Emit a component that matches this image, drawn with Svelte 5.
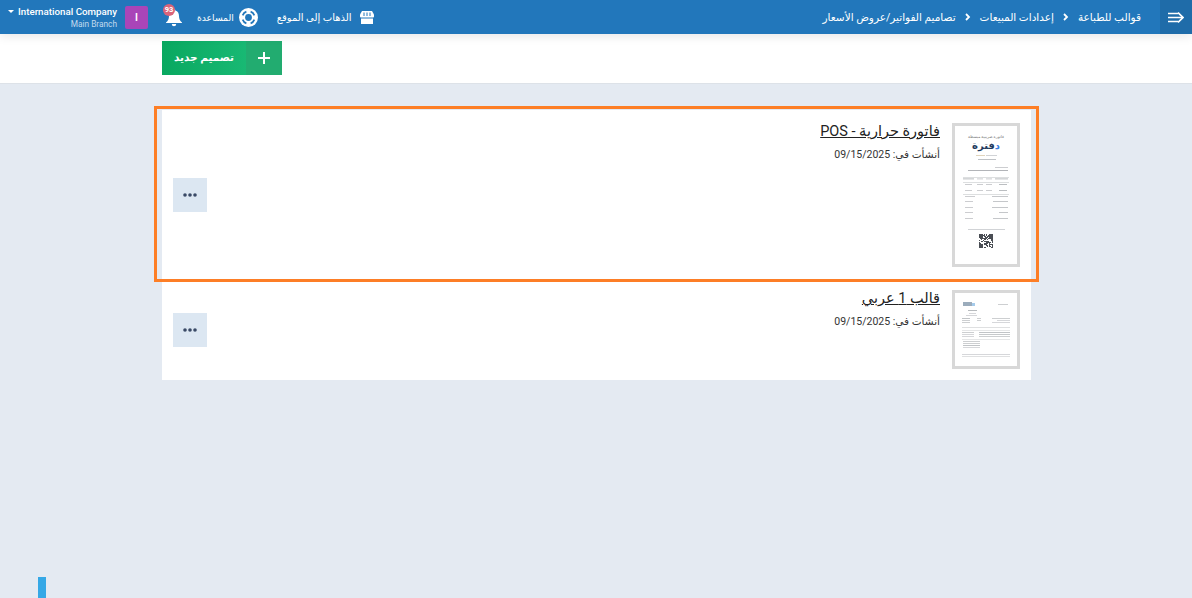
<script>
  const crumbs = ['قوالب للطباعة', 'إعدادات المبيعات', 'تصاميم الفواتير/عروض الأسعار'];
  const templates = [
    { title: 'فاتورة حرارية - POS', date: '09/15/2025', kind: 'thermal' },
    { title: 'قالب 1 عربي', date: '09/15/2025', kind: 'a4' },
  ];

  // [x, y, width, colour] of the tiny lines in the previews
  const thermalLines = [
    [21, 29, 9, '#c9b48a'], [31, 29, 11, '#aeb2b8'],
    [23, 33, 18, '#8f949a'],
    [40, 41, 13, '#a5a8ad'], [13, 44, 40, '#777b82'],
    [8, 51, 46, '#c5c7ca'], [8, 52.500, 11, '#888c92'], [22, 52.500, 6, '#a5a8ad'], [31, 52.500, 6, '#a5a8ad'], [40, 52.500, 13, '#888c92'],
    [8, 56, 46, '#c5c7ca'],
    [10, 58, 7, '#a5a8ad'], [22, 58, 6, '#a5a8ad'], [31, 58, 6, '#a5a8ad'], [44, 58, 8, '#888c92'],
    [10, 64, 7, '#a5a8ad'], [22, 64, 6, '#a5a8ad'], [31, 64, 6, '#a5a8ad'], [44, 64, 8, '#888c92'],
    [8, 68, 46, '#c5c7ca'],
    [10, 70, 10, '#a5a8ad'], [37, 70, 16, '#999da2'],
    [10, 75, 8, '#a5a8ad'], [38, 75, 15, '#999da2'],
    [10, 81, 8, '#a5a8ad'], [37, 81, 16, '#999da2'],
    [10, 86, 8, '#a5a8ad'], [44, 86, 9, '#999da2'],
    [10, 92, 8, '#a5a8ad'], [38, 92, 15, '#999da2'],
    [13, 103, 37, '#aeb2b8'],
  ];
  const a4Lines = [
    [43, 11, 10, '#a5a8ad'],
    [13, 17, 9, '#7f8489'], [14, 20, 7, '#b5b8bd'], [11, 22, 11, '#b5b8bd'],
    [7, 25, 8, '#8f949a'], [7, 27, 8, '#a5a8ad'], [7, 29, 8, '#a5a8ad'],
    [22, 25, 4, '#a5a8ad'], [22, 27, 4, '#a5a8ad'],
    [37, 25, 18, '#a5a8ad'], [42, 27, 13, '#b5b8bd'], [37, 29, 18, '#b5b8bd'],
    [7, 34, 48, '#c5c7ca'], [7, 37, 48, '#d0d2d5'],
    [7, 39, 12, '#a5a8ad'], [24, 39, 31, '#8f949a'],
    [7, 41, 12, '#b5b8bd'], [24, 41, 31, '#999da2'],
    [7, 43, 12, '#b5b8bd'], [24, 43, 31, '#a5a8ad'],
    [7, 46, 48, '#d0d2d5'],
    [8, 48, 17, '#a5a8ad'], [8, 50, 17, '#a5a8ad'], [8, 52, 17, '#8f949a'], [8, 54, 17, '#b5b8bd'],
    [7, 61, 48, '#b5b8bd'], [7, 63, 48, '#c5c7ca'],
  ];

  // scattered modules for the little QR code, fixed seed so it never changes
  const qrCells = [];
  let seed = 7;
  for (let y = 0; y < 14; y++) {
    for (let x = 0; x < 14; x++) {
      seed = (seed * 137 + 61) % 251;
      if (seed % 2 === 0) qrCells.push([x, y]);
    }
  }
</script>

<div class="page" dir="rtl">
  <header class="topbar">
    <button class="menu-toggle" aria-label="menu">
      <svg width="16" height="11" viewBox="0 0 16 11" fill="none" stroke="#fff" stroke-width="1.700">
        <path d="M0 1.500h10M0 5.500h14M0 9.500h10" />
        <path d="M10 .6 15 5.500l-5 4.900" />
      </svg>
    </button>
    <nav class="crumbs">
      {#each crumbs as crumb, i}
        {#if i > 0}
          <svg width="6" height="8" viewBox="0 0 6 8" fill="none" stroke="#fff" stroke-width="1.800"><path d="M1 1l3 3-3 3" /></svg>
        {/if}
        <span>{crumb}</span>
      {/each}
    </nav>
    <div class="top-actions">
      <a class="top-link" href="#site">
        <svg width="14" height="13" viewBox="0 0 14 13" fill="#fff">
          <path d="M2 0h10l2 3.500V5.500a1 1 0 0 1-1 1H1a1 1 0 0 1-1-1V3.500z" />
          <path d="M1 7.500h12V13H1z" />
          <path d="M4 1.500v3.500M7 1.500v3.500M10 1.500v3.500" stroke="#2277bb" stroke-width="1" />
        </svg>
        <span>الذهاب إلى الموقع</span>
      </a>
      <a class="top-link help-link" href="#help">
        <svg width="19" height="19" viewBox="0 0 19 19" fill="none">
          <circle cx="9.500" cy="9.500" r="9.500" fill="#fff" />
          <circle cx="9.500" cy="9.500" r="3.400" fill="#2277bb" />
          <path d="M15.330 11.620A6.200 6.200 0 0 1 11.620 15.330M7.380 15.330A6.200 6.200 0 0 1 3.670 11.620M3.670 7.380A6.200 6.200 0 0 1 7.380 3.670M11.620 3.670A6.200 6.200 0 0 1 15.330 7.380" stroke="#2277bb" stroke-width="1.700" />
        </svg>
        <span>المساعدة</span>
      </a>
      <div class="bell">
        <svg width="16" height="18" viewBox="0 0 16 18" fill="#fff">
          <path d="M8 0a1.300 1.300 0 0 1 1.300 1.400C12 2 13 4.300 13 7c0 3 1 5 3 6.500V14H0v-.5C2 12 3 10 3 7c0-2.700 1-5 3.700-5.600A1.300 1.300 0 0 1 8 0z" />
          <path d="M5.800 15h4.400a2.200 2.200 0 0 1-4.400 0z" />
        </svg>
        <span class="badge">93</span>
      </div>
      <span class="avatar">I</span>
      <div class="company">
        <div class="company-name" dir="ltr"><i class="caret"></i>International Company</div>
        <div class="branch">Main Branch</div>
      </div>
    </div>
  </header>

  <div class="toolbar">
    <div class="toolbar-inner">
      <button class="new-btn">
        <span class="plus">
          <svg width="12" height="12" viewBox="0 0 12 12" stroke="#fff" stroke-width="2"><path d="M6 0v12M0 6h12" /></svg>
        </span>
        <span class="new-label">تصميم جديد</span>
      </button>
    </div>
  </div>

  <main class="content">
    <div class="list">
      {#each templates as t}
        <article class="card {t.kind}">
          <div class="thumb">
            {#if t.kind === 'thermal'}
              <div class="thumb-head">فاتورة ضريبية مبسطة</div>
              <div class="thumb-logo"><span class="dal">د</span>فترة</div>
              <svg class="thumb-art" viewBox="0 0 62 138" width="62" height="138">
                <g opacity="0.7">
                  {#each thermalLines as l}
                    <rect x={l[0]} y={l[1]} width={l[2]} height="0.800" fill={l[3]} />
                  {/each}
                </g>
                <g transform="translate(24 108)" fill="#4a4e54">
                  {#each qrCells as c}
                    <rect x={c[0]} y={c[1]} width="1" height="1" />
                  {/each}
                  <path d="M0 0h4v4H0zM10 0h4v4h-4zM0 10h4v4H0z" />
                </g>
              </svg>
            {:else}
              <svg class="thumb-art" viewBox="0 0 62 73" width="62" height="73">
                <g opacity="0.55">
                  <rect x="8" y="9" width="9" height="4" fill="#4b6a86" />
                  <rect x="17" y="10" width="3" height="3" fill="#5da2dc" />
                  {#each a4Lines as l}
                    <rect x={l[0]} y={l[1]} width={l[2]} height="1" fill={l[3]} />
                  {/each}
                </g>
              </svg>
            {/if}
          </div>
          <div class="card-body">
            <a class="title" href="#template">{t.title}</a>
            <div class="date">أنشأت في: {t.date}</div>
          </div>
          <button class="more" aria-label="more">
            <svg width="14" height="4" viewBox="0 0 14 4" fill="#3a4a66"><circle cx="2" cy="2" r="1.800" /><circle cx="7" cy="2" r="1.800" /><circle cx="12" cy="2" r="1.800" /></svg>
          </button>
        </article>
      {/each}
    </div>
  </main>

  <div class="highlight"></div>
  <div class="side-tab"></div>
</div>

<style>
  :global(body) {
    margin: 0;
    background: #e4eaf2;
  }

  .page {
    position: relative;
    height: 598px;
    overflow: hidden;
    font-family: Roboto, "DejaVu Sans", sans-serif;
    background: #e4eaf2;
  }

  .topbar {
    position: relative;
    display: flex;
    align-items: center;
    height: 34px;
    background: #2277bb;
    color: #fff;
    font-size: 10.500px;
    box-shadow: 0 2px 10px rgba(0, 0, 0, 0.1);
  }

  .menu-toggle {
    display: flex;
    align-items: center;
    justify-content: center;
    width: 32px;
    height: 34px;
    padding: 0;
    border: none;
    background: #1f6ca9;
  }

  .crumbs {
    display: flex;
    align-items: center;
    gap: 9px;
    margin-right: 19px;
  }

  .top-actions {
    display: flex;
    align-items: center;
    margin-right: auto;
    height: 34px;
    font-size: 10px;
  }

  .top-link {
    display: flex;
    align-items: center;
    gap: 8px;
    color: #fff;
    text-decoration: none;
  }

  .help-link {
    margin-right: 19px;
    gap: 5px;
    font-size: 9.200px;
  }

  .bell {
    position: relative;
    display: flex;
    margin-right: 15px;
    margin-top: 1px;
  }

  .badge {
    position: absolute;
    top: -5px;
    left: -3px;
    width: 12px;
    height: 12px;
    border-radius: 50%;
    background: #d9647a;
    font-size: 7.500px;
    font-weight: 700;
    line-height: 12px;
    text-align: center;
  }

  .avatar {
    display: flex;
    align-items: center;
    justify-content: center;
    width: 23px;
    height: 23px;
    margin-right: 18px;
    border-radius: 2px;
    background: #a945b8;
    font-size: 10px;
    font-weight: 700;
  }

  .company {
    margin: 0 8px;
    text-align: left;
  }

  .company-name {
    font-size: 9.750px;
    font-weight: 500;
    line-height: 13px;
  }

  .caret {
    display: inline-block;
    margin-right: 4px;
    vertical-align: middle;
    border: 3px solid transparent;
    border-top: 3px solid #fff;
    border-bottom: 0;
  }

  .branch {
    margin-top: 1px;
    font-size: 8.300px;
    line-height: 11px;
    color: #c3daee;
    text-align: right;
  }

  .toolbar {
    height: 49px;
    background: #fff;
    border-bottom: 1px solid #dde2e8;
  }

  .toolbar-inner {
    display: flex;
    justify-content: flex-end;
    width: 869px;
    margin-right: 161px;
    padding-top: 7px;
  }

  .new-btn {
    display: flex;
    align-items: stretch;
    width: 120px;
    height: 34px;
    padding: 0;
    border: none;
    background: linear-gradient(90deg, #09a860, #1fc07c);
    color: #fff;
    font-family: inherit;
    font-size: 10.500px;
    font-weight: 700;
  }

  .plus {
    display: flex;
    align-items: center;
    justify-content: center;
    width: 36px;
    background: #22ac70;
  }

  .new-label {
    flex: 1;
    line-height: 34px;
  }

  .content {
    padding: 26px 161px 0 0;
  }

  .list {
    display: flex;
    flex-direction: column;
    width: 869px;
  }

  .card {
    display: flex;
    align-items: center;
    box-sizing: border-box;
    padding: 0 11px;
    background: #fff;
  }

  .card.thermal {
    height: 170px;
  }

  .card.a4 {
    height: 100px;
    padding-bottom: 1px;
  }

  .thumb {
    position: relative;
    flex: none;
    box-sizing: border-box;
    width: 68px;
    border: 3px solid #d8d8d8;
    background: #fff;
    overflow: hidden;
  }

  .thermal .thumb {
    height: 144px;
  }

  .a4 .thumb {
    height: 79px;
  }

  .thumb-art {
    display: block;
  }

  .thumb-head {
    position: absolute;
    top: 8px;
    left: 0;
    right: 0;
    font-size: 4px;
    line-height: 5px;
    color: #777;
    text-align: center;
  }

  .thumb-logo {
    position: absolute;
    top: 13px;
    left: 0;
    right: 0;
    font-size: 10px;
    font-weight: 700;
    line-height: 14px;
    color: #1f3a5f;
    text-align: center;
  }

  .dal {
    color: #3f7fe0;
  }

  .card-body {
    flex: 1;
    align-self: flex-start;
    margin-right: 12px;
    color: #222;
  }

  .thermal .card-body {
    padding-top: 11px;
  }

  .a4 .card-body {
    padding-top: 8px;
  }

  .title {
    display: inline-block;
    font-size: 14.500px;
    line-height: 20px;
    color: #222;
    text-decoration: underline;
  }

  .date {
    margin-top: 6px;
    font-size: 10.500px;
    line-height: 14px;
    color: #333;
  }

  .more {
    display: flex;
    align-items: center;
    justify-content: center;
    width: 34px;
    height: 34px;
    padding: 0;
    border: none;
    background: #dce7f2;
  }

  .highlight {
    position: absolute;
    top: 106px;
    left: 154px;
    box-sizing: border-box;
    width: 885px;
    height: 176px;
    border: 3px solid #fd7e26;
    pointer-events: none;
  }

  .side-tab {
    position: absolute;
    left: 38px;
    top: 577px;
    width: 8px;
    height: 21px;
    background: #35a8e6;
  }
</style>
